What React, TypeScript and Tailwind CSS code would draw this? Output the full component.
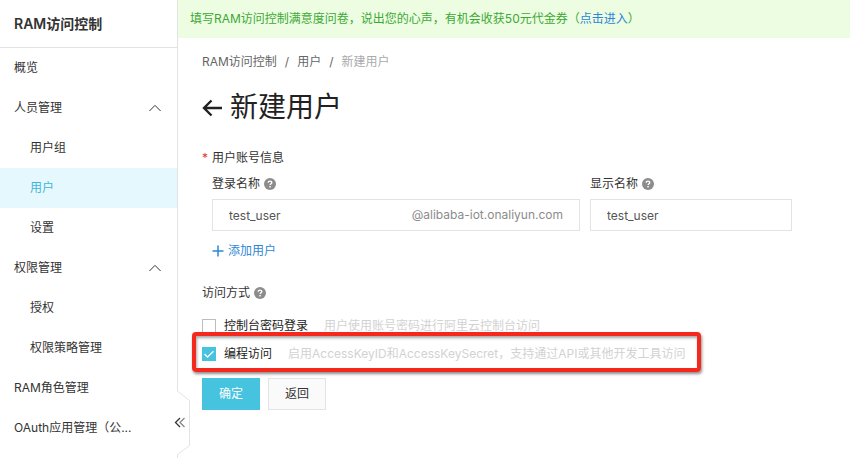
import { ReactNode, useState } from "react";
import clsx from "clsx";

const groups = [
    { title: "人员管理", items: ["用户组", "用户", "设置"] },
    { title: "权限管理", items: ["授权", "权限策略管理"] },
];

function HelpIcon() {
    return (
        <svg viewBox="0 0 12 12" className="h-3 w-3 shrink-0" aria-hidden="true">
            <circle cx="6" cy="6" r="6" fill="#8c8c8c" />
            <path d="M4.2 4.8c0-1 .8-1.7 1.8-1.7s1.8.6 1.8 1.5c0 1.2-1.7 1.2-1.7 2.5" fill="none" stroke="#fff" strokeWidth="1.4" />
            <rect x="5.3" y="8" width="1.5" height="1.4" fill="#fff" />
        </svg>
    );
}

function NavLink({ active, nested, children }: { active?: boolean; nested?: boolean; children: ReactNode }) {
    return (
        <a
            href="#"
            className={clsx(
                "block h-10 truncate pr-4 leading-10",
                nested ? "pl-[30px]" : "pl-[14px]",
                active && "bg-[#e5f8fd] text-[#3fb5d8]"
            )}
        >
            {children}
        </a>
    );
}

function NavGroup({ title, items }: { title: string; items: string[] }) {
    const [open, setOpen] = useState(true);

    return (
        <div>
            <button
                type="button"
                aria-expanded={open}
                onClick={() => setOpen(!open)}
                className="flex h-10 w-full items-center justify-between pr-4 pl-[14px]"
            >
                {title}
                <svg viewBox="0 0 12 8" className={clsx("h-2 w-3", !open && "rotate-180")} fill="none" stroke="#333" aria-hidden="true">
                    <path d="M0.4 7 6 1.4 11.6 7" />
                </svg>
            </button>
            {open &&
                items.map((item) => (
                    <NavLink key={item} nested active={item === "用户"}>
                        {item}
                    </NavLink>
                ))}
        </div>
    );
}

function Sidebar() {
    return (
        <aside className="relative w-[178px] shrink-0 border-r border-[#e3e3e3]">
            <h2 className="h-12 border-b border-[#e3e3e3] pl-[14px] text-sm leading-[47px] font-semibold">RAM访问控制</h2>
            <nav>
                <NavLink>概览</NavLink>
                {groups.map((group) => (
                    <NavGroup key={group.title} {...group} />
                ))}
                <NavLink>RAM角色管理</NavLink>
                <NavLink>OAuth应用管理（公...</NavLink>
            </nav>

            {/* Collapse handle sits over the border */}
            <button type="button" aria-label="收起" className="absolute -right-[14px] bottom-0 h-[67px] w-[14px]">
                <svg viewBox="0 0 14 67" className="h-full w-full overflow-visible" fill="none" aria-hidden="true">
                    <path d="M0 0H.5L12.5 9.5V54.5L.5 63.5V67H-1V0Z" fill="#fff" />
                    <path d="M.5 0 12.5 9.5V54.5L.5 63.5V67" stroke="#e3e3e3" />
                    <path d="M3 27-1.5 31.500 3 36" stroke="#333" strokeWidth="1.3" />
                    <path d="M7.5 27 3 31.5 7.5 36" stroke="#888" strokeWidth="1.3" />
                </svg>
            </button>
        </aside>
    );
}

function AccessOption({ id, label, hint, defaultChecked }: { id: string; label: string; hint: string; defaultChecked?: boolean }) {
    return (
        <div className="flex h-7 items-center">
            <span className="relative h-[14px] w-[14px] shrink-0">
                <input
                    id={id}
                    type="checkbox"
                    defaultChecked={defaultChecked}
                    className="peer block h-[14px] w-[14px] appearance-none border border-[#bdbdbd] bg-white checked:border-[#46c3de] checked:bg-[#46c3de]"
                />
                <svg viewBox="0 0 14 14" className="pointer-events-none absolute inset-0 hidden peer-checked:block" fill="none" stroke="#fff" strokeWidth="1.3" aria-hidden="true">
                    <path d="M2.5 7 5.5 10 11.5 4.2" />
                </svg>
            </span>
            <label htmlFor={id} className="ml-2 whitespace-nowrap text-[#222]">
                {label}
            </label>
            <span className="ml-4 whitespace-nowrap text-[#d2d2d2]">{hint}</span>
        </div>
    );
}

export default function App() {
    return (
        <div lang="zh-CN" className="flex min-h-screen bg-white font-[Inter,'Noto_Sans_CJK_SC',sans-serif] text-xs text-[#333]">
            <Sidebar />

            <main className="min-w-0 flex-1">
                <div className="bg-[#ecfde2] pl-3 leading-[38px] text-[#3da835]">
                    填写RAM访问控制满意度问卷，说出您的心声，有机会收获50元代金券（
                    <a href="#" className="text-[#2f86d6]">
                        点击进入
                    </a>
                    ）
                </div>

                <div className="px-6 pt-4">
                    <nav className="flex gap-2 leading-4 text-[#666]">
                        <a href="#">RAM访问控制</a>
                        <span>/</span>
                        <a href="#">用户</a>
                        <span>/</span>
                        <span className="text-[#aaa]">新建用户</span>
                    </nav>

                    <h1 className="mt-4 flex h-11 items-center gap-2 text-[28px] text-[#222]">
                        <a href="#" aria-label="返回">
                            <svg viewBox="0 0 20 18" className="h-[18px] w-5" fill="none" stroke="#222" strokeWidth="2.4" aria-hidden="true">
                                <path d="M9.5 1.5 2 9l7.5 7.5M2 9h18" />
                            </svg>
                        </a>
                        新建用户
                    </h1>

                    <form className="mt-[18px]" onSubmit={(e) => e.preventDefault()}>
                        <fieldset>
                            <legend className="leading-5">
                                <span className="inline-block w-[10px] text-[#e0392b]">*</span>
                                用户账号信息
                            </legend>
                            <div className="ml-[10px] grid max-w-[580px] grid-cols-[184fr_101fr] gap-x-[10px] pt-2">
                                <div>
                                    <div className="flex items-center gap-1 leading-4">
                                        <label htmlFor="login">登录名称</label>
                                        <HelpIcon />
                                    </div>
                                    <div className="mt-[7px] flex h-8 items-center border border-[#e3e3e3] px-4">
                                        <input id="login" defaultValue="test_user" className="h-full min-w-0 flex-1 text-[#555] outline-none" />
                                        <span className="text-[#8c8c8c]">@alibaba-iot.onaliyun.com</span>
                                    </div>
                                </div>
                                <div>
                                    <div className="flex items-center gap-1 leading-4">
                                        <label htmlFor="display">显示名称</label>
                                        <HelpIcon />
                                    </div>
                                    <input id="display" defaultValue="test_user" className="mt-[7px] h-8 w-full border border-[#e3e3e3] px-4 text-[#555] outline-none" />
                                </div>
                            </div>
                            <button type="button" className="mt-3 ml-[10px] flex items-center gap-1 leading-4 text-[#2f86d6]">
                                <svg viewBox="0 0 12 12" className="h-3 w-3" stroke="currentColor" strokeWidth="1.5" aria-hidden="true">
                                    <path d="M6 .5v11M.5 6h11" />
                                </svg>
                                添加用户
                            </button>
                        </fieldset>

                        <fieldset className="mt-6">
                            <legend className="flex items-center gap-1 leading-5">
                                访问方式
                                <HelpIcon />
                            </legend>
                            <div className="pt-[9px]">
                                <AccessOption id="console" label="控制台密码登录" hint="用户使用账号密码进行阿里云控制台访问" />
                                <div className="relative w-fit">
                                    <AccessOption
                                        id="api"
                                        label="编程访问"
                                        hint="启用AccessKeyID和AccessKeySecret，支持通过API或其他开发工具访问"
                                        defaultChecked
                                    />
                                    <div className="pointer-events-none absolute -top-2 -right-4 -bottom-1 -left-[10px] rounded border-4 border-[#f5281e] shadow-[1px_2px_3px_rgba(0,0,0,0.45),inset_1px_2px_3px_rgba(0,0,0,0.35)]" />
                                </div>
                            </div>
                        </fieldset>

                        <div className="mt-[10px] flex gap-2">
                            <button type="submit" className="h-8 w-[58px] bg-[#46c3de] text-white">
                                确定
                            </button>
                            <button type="button" className="h-8 w-[58px] border border-[#e3e3e3] bg-[#fafafa]">
                                返回
                            </button>
                        </div>
                    </form>
                </div>
            </main>
        </div>
    );
}
